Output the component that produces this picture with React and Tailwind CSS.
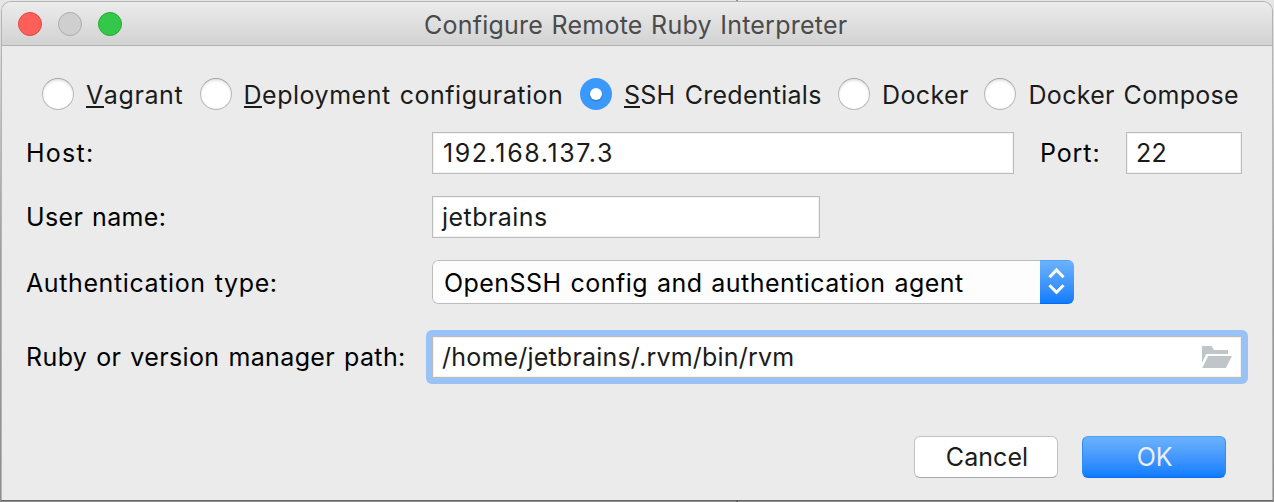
import React from "react";

function Radio({ label, mnemonic, checked, className, textClass }) {
  return (
    <label className={`flex items-center ${className}`}>
      <span
        className={
          checked
            ? "flex h-8 w-8 shrink-0 items-center justify-center rounded-full bg-[#3b99fc]"
            : "h-8 w-8 shrink-0 rounded-full border border-[#b9b9b9] border-t-[#a2a2a2] bg-white shadow-[inset_0_2px_2px_rgba(0,0,0,0.1)]"
        }
      >
        {checked && <span className="h-3 w-3 rounded-full bg-white shadow-[0_1px_2px_rgba(0,0,0,0.3)]" />}
      </span>
      <span className={`relative top-px whitespace-nowrap text-[#1b1b1b] ${textClass}`}>
        {mnemonic ? (
          <>
            <span className="inline-block h-[29px] border-b-2 border-[#1b1b1b] leading-8">{label[0]}</span>
            {label.slice(1)}
          </>
        ) : (
          label
        )}
      </span>
    </label>
  );
}

function Field({ className = "", children }) {
  return (
    <div
      className={`flex h-[42px] items-center whitespace-nowrap border border-[#bcbcbc] bg-white text-[#1b1b1b] shadow-[inset_0_0_0_1px_#f2f2f2] ${className}`}
    >
      {children}
    </div>
  );
}

export default function App() {
  return (
    <div className="relative h-[502px] w-[1274px] overflow-hidden bg-[#a8a8a8] font-['Inter','Liberation_Sans',sans-serif] text-[25px] leading-8 text-black">
      <div className="flex h-[502px] flex-col bg-linear-to-b from-[#e6e6e6] via-[#9e9e9e] to-[#8e8e8e] px-px pt-px">
        <div className="flex h-[499px] w-[1272px] flex-col overflow-hidden rounded-t-[10px] border-x border-t border-[#b4b4b4] bg-[#ebebeb]">
          <header className="flex h-11 shrink-0 items-center border-b border-[#b1b1b1] bg-linear-to-b from-[#ececec] to-[#d2d2d2] pl-4">
            <div className="flex gap-4">
              <span className="h-6 w-6 rounded-full border border-[#e14942] bg-[#fe5f58]" />
              <span className="h-6 w-6 rounded-full border border-[#acacac] bg-[#cfcfcf]" />
              <span className="h-6 w-6 rounded-full border border-[#26a934] bg-[#34c84a]" />
            </div>
            <h1 className="relative top-px ml-[302px] whitespace-nowrap tracking-[0.23px] text-[#4b4b4b] [word-spacing:1.2px]">
              Configure Remote Ruby Interpreter
            </h1>
          </header>

          <main className="flex flex-col pl-6">
            <div className="mt-8 flex h-8 pl-4">
              <Radio label="Vagrant" mnemonic className="w-[158px]" textClass="ml-3 tracking-[0.6px]" />
              <Radio
                label="Deployment configuration"
                mnemonic
                className="w-[380px]"
                textClass="ml-[11.5px] tracking-[0.52px] [word-spacing:1.5px]"
              />
              <Radio
                label="SSH Credentials"
                mnemonic
                checked
                className="w-[258px]"
                textClass="ml-3 tracking-[0.26px] [word-spacing:2px]"
              />
              <Radio label="Docker" className="w-[146px]" textClass="ml-3 tracking-[0.39px]" />
              <Radio
                label="Docker Compose"
                textClass="ml-[12.5px] tracking-[0.3px] [word-spacing:1.5px]"
              />
            </div>

            <div className="mt-[22px] flex h-[42px] items-center">
              <span className="w-[406px] tracking-[1.25px]">Host:</span>
              <Field className="w-[582px] pl-2.5 tracking-[1.6px]">192.168.137.3</Field>
              <span className="ml-[26px] w-[86px] tracking-[0.9px]">Port:</span>
              <Field className="w-[116px] pl-[9px] tracking-[0.253px]">22</Field>
            </div>

            <div className="mt-[22px] flex h-[42px] items-center">
              <span className="w-[406px] tracking-[0.35px] [word-spacing:1.5px]">User name:</span>
              <Field className="w-[388px] pl-[9px] tracking-[0.451px]">jetbrains</Field>
            </div>

            <div className="mt-[22px] flex h-11 items-center">
              <span className="relative top-px w-[406px] tracking-[0.61px] [word-spacing:1.5px]">
                Authentication type:
              </span>
              <div className="flex h-11 w-[642px] overflow-hidden rounded-md">
                <div className="flex w-[608px] items-center whitespace-nowrap rounded-l-md border border-r-0 border-[#bcbcbc] bg-[#fdfdfd] pl-[11px] tracking-[0.45px] [word-spacing:1.5px]">
                  <span className="relative top-px">OpenSSH config and authentication agent</span>
                </div>
                <div className="flex w-[34px] items-center justify-center border-y border-t-[#4ba0f8] border-b-[#0a6cf5] bg-linear-to-b from-[#6bb2fb] to-[#0a7cff]">
                  <svg width="34" height="42" viewBox="0 0 34 42" fill="none" stroke="#fff" strokeWidth="3">
                    <path d="M9.5 16.2 16.5 9l7 7.2M9.5 24.2l7 7.2 7-7.2" />
                  </svg>
                </div>
              </div>
            </div>

            <div className="mt-[26px] flex h-[54px] items-center">
              <span className="w-[400px] whitespace-nowrap tracking-[0.38px] [word-spacing:1.5px]">
                Ruby or version manager path:
              </span>
              <div className="w-[822px] rounded-md bg-[#99c3f5] p-1.5">
                <Field className="justify-between pl-[9px] pr-[9px]">
                  <span className="tracking-[0.2px]">/home/jetbrains/.rvm/bin/rvm</span>
                  <svg width="30" height="22" viewBox="0 0 30 22" fill="#c0c5c9">
                    <path d="M0 0h9.5l2.5 4h14v4H4.3L0 16.8z" />
                    <path d="M6.3 10H30l-6.2 12H.2z" />
                  </svg>
                </Field>
              </div>
            </div>

            <div className="mt-[52px] flex h-[42px] gap-6 pl-[888px]">
              <button className="flex w-36 items-center justify-center rounded-md border border-[#c3c3c3] border-b-[#aaaaaa] bg-white pl-0.5 tracking-[0.05px] text-[#1b1b1b]">
                Cancel
              </button>
              <button className="flex w-36 items-center justify-center rounded-md border border-[#2f8bf5] border-t-[#4ba0f8] border-b-[#0a6cf5] bg-linear-to-b from-[#6bb2fb] to-[#0a7cff] pl-px tracking-[-0.116px] text-[#eeeeee]">
                OK
              </button>
            </div>
          </main>
        </div>
        <div className="h-px bg-[#666666]" />
      </div>
      <span className="absolute left-[736px] top-0 h-px w-0.5 bg-[#8c8c8c]" />
      <span className="absolute bottom-0 left-[736px] h-px w-0.5 bg-[#5a5a5a]" />
    </div>
  );
}
